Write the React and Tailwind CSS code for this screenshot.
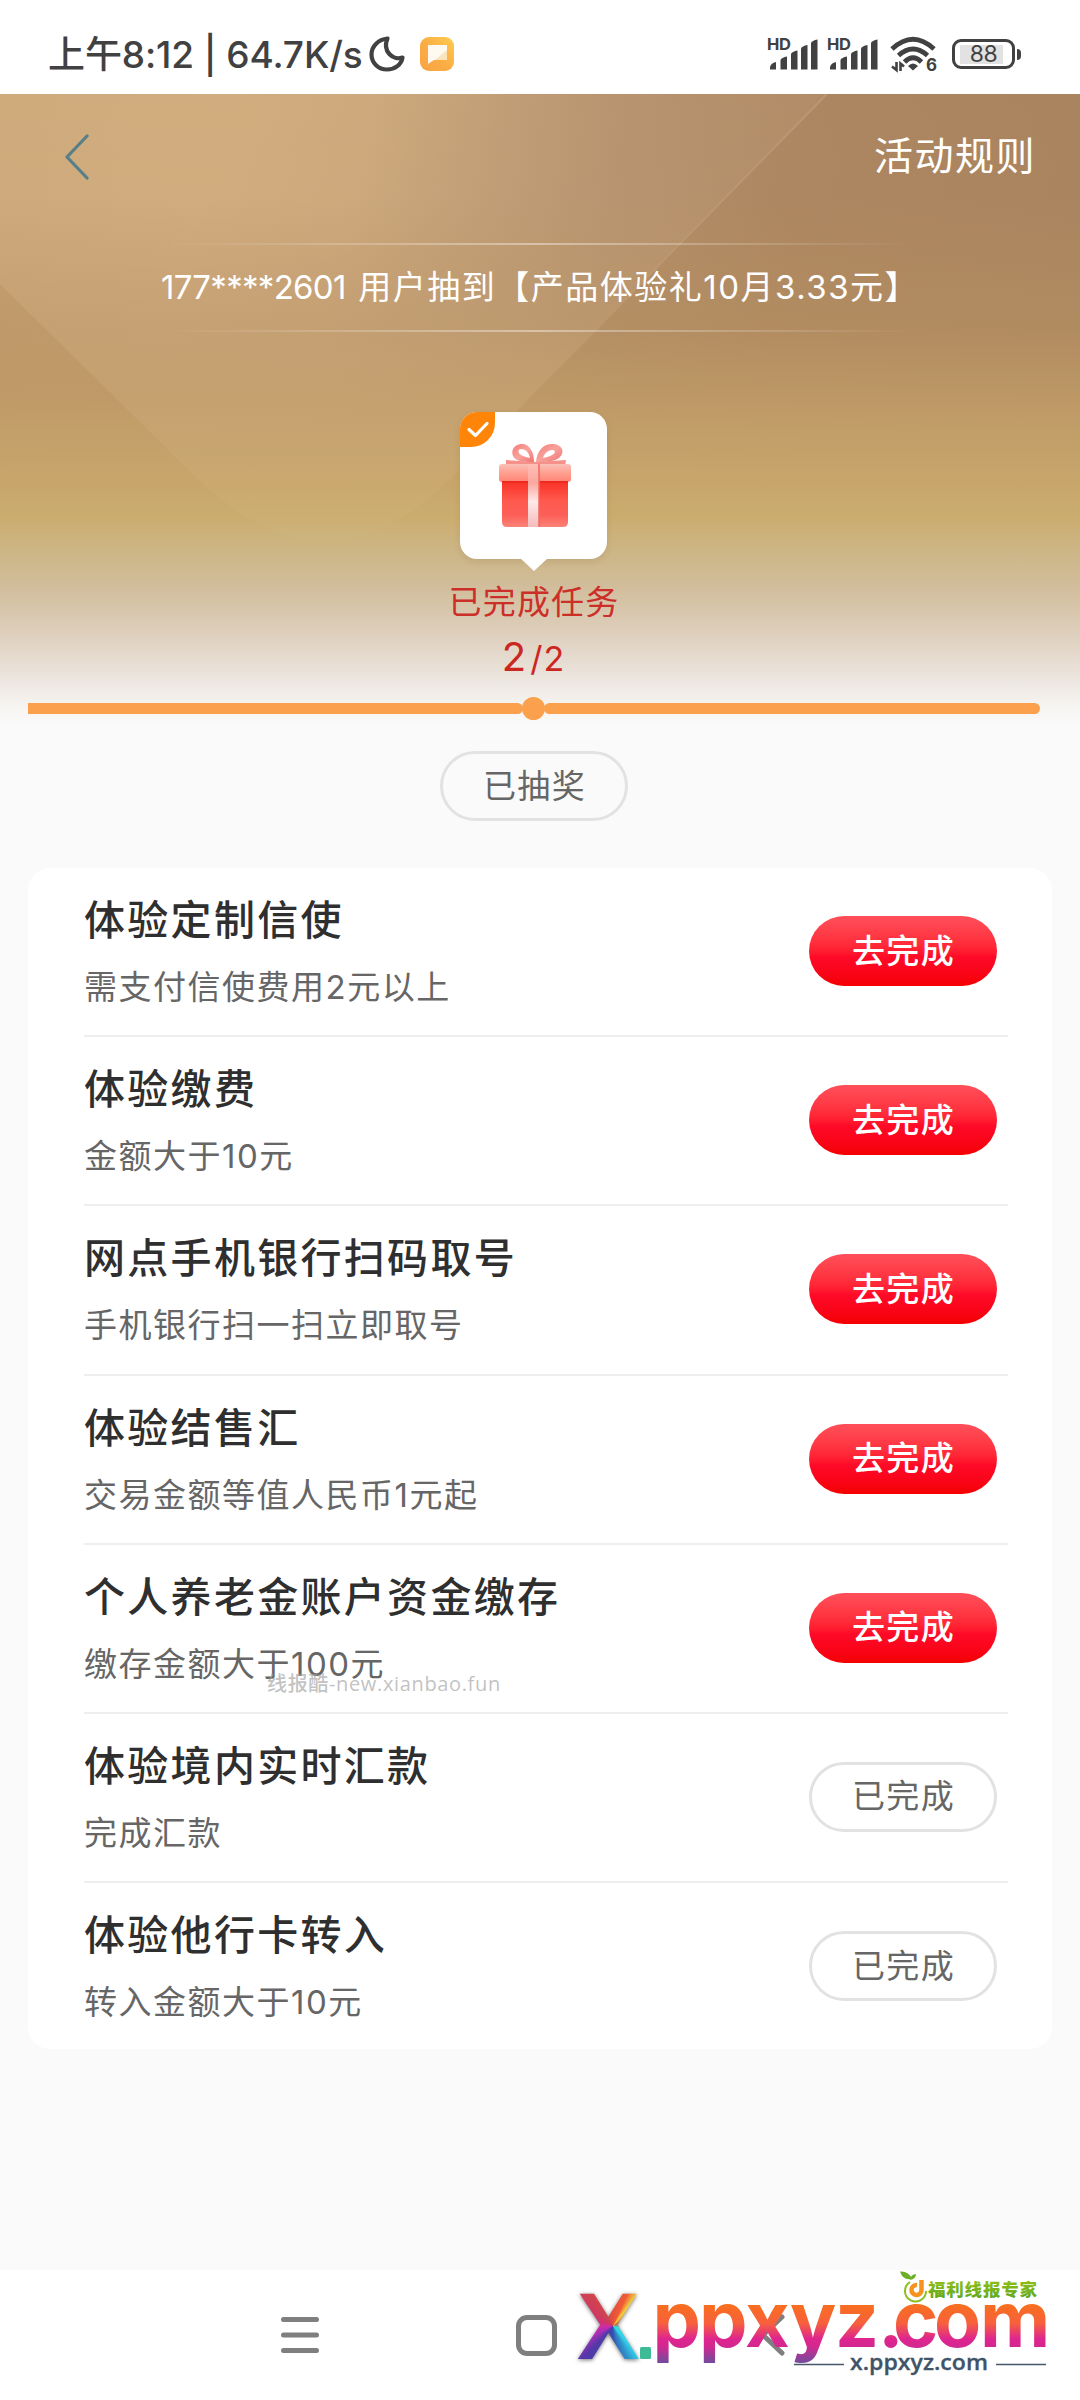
import clsx from "clsx";

const TASKS = [
  { title: "体验定制信使", desc: "需支付信使费用2元以上", done: false },
  { title: "体验缴费", desc: "金额大于10元", done: false },
  { title: "网点手机银行扫码取号", desc: "手机银行扫一扫立即取号", done: false },
  { title: "体验结售汇", desc: "交易金额等值人民币1元起", done: false },
  { title: "个人养老金账户资金缴存", desc: "缴存金额大于100元", done: false },
  { title: "体验境内实时汇款", desc: "完成汇款", done: true },
  { title: "体验他行卡转入", desc: "转入金额大于10元", done: true },
];

export default function App() {
  return (
    <div className="relative flex h-[2400px] w-[1080px] flex-col overflow-hidden bg-[#fafafa] font-['Inter','Noto_Sans_CJK_SC',sans-serif]">
      <StatusBar />

      {/* HERO */}
      <div className="relative h-[774px] shrink-0">
        <HeroBackground />
        <div className="relative flex h-full flex-col items-center">
          <div className="flex h-[124px] w-full items-center justify-between pr-[44px] pl-[63px]">
            <svg width="28" height="48" viewBox="0 0 28 48" fill="none">
              <path d="M24 4 L4 25 L24 46" stroke="#577f89" strokeWidth="3.2" strokeLinecap="round" strokeLinejoin="round" />
            </svg>
            <span className="pb-[2px] text-[39px] leading-none tracking-[1.5px] text-white">活动规则</span>
          </div>

          <div className="mt-[25px] mr-[6px] flex w-[760px] flex-col items-center">
            <div className="h-[2px] w-full bg-linear-to-r from-white/0 via-white/40 to-white/0"></div>
            <p className="flex h-[85px] items-center pl-[6px] text-[33px] leading-none whitespace-pre text-white">
              <span className="mr-[4px] tracking-[-0.7px]">177****2601 </span>
              <span className="tracking-[1.5px]">用户抽到【产品体验礼10月3.33元】</span>
            </p>
            <div className="h-[2px] w-full bg-linear-to-r from-white/0 via-white/40 to-white/0"></div>
          </div>

          <GiftBubble />
          <p className="mt-[26px] mr-[12px] text-[33px] leading-[34px] tracking-[1.2px] text-[#cc2e28]">已完成任务</p>
          <p className="mt-[15px] mr-[13px] flex h-[46px] items-baseline text-[#cc2621]">
            <span className="text-[40px] leading-[46px]">2</span>
            <span className="ml-[4px] text-[34px] leading-[46px] tracking-[1px]">/2</span>
          </p>

          <div className="mt-[17px] flex w-full items-center pr-[40px] pl-[28px]">
            <div className="h-[11px] w-[495px] rounded-r-full bg-[#fba14e]"></div>
            <div className="-mx-[1px] size-[23px] rounded-full bg-[#fba14e]"></div>
            <div className="h-[11px] flex-1 rounded-full bg-[#fba14e]"></div>
          </div>

          <div className="mt-[31px] mr-[12px]">
            <Pill done>已抽奖</Pill>
          </div>
        </div>
      </div>

      {/* TASKS */}
      <div className="relative mx-[28px] h-[1181px] shrink-0 rounded-[22px] bg-white pr-[44px] pl-[56px]">
        <div>
          {TASKS.map((task) => (
            <TaskRow key={task.title} {...task} />
          ))}
        </div>
        <span className="absolute top-[803px] left-[239px] font-['Open_Sans','Noto_Sans_CJK_SC',sans-serif] text-[20px] leading-[26px] font-medium tracking-[0.65px] whitespace-nowrap text-[#a0a0a0]/65">
          线报酷-new.xianbao.fun
        </span>
      </div>

      <NavBar />
    </div>
  );
}

function TaskRow({ title, desc, done }) {
  return (
    <div className="flex h-[169.2px] justify-between border-b-2 border-[#eeeeee] last:border-b-0">
      <div className="flex flex-col pt-[28px]">
        <p className="text-[41px] leading-[48px] font-medium tracking-[2.3px] text-[#2f2f2f]">{title}</p>
        <p className="mt-[23px] text-[33px] leading-[40px] tracking-[1.5px] text-[#666666]">{desc}</p>
      </div>
      <div className="mt-[48px] mr-[11px]">
        <Pill done={done}>{done ? "已完成" : "去完成"}</Pill>
      </div>
    </div>
  );
}

function Pill({ done, children }) {
  return (
    <div
      className={clsx(
        "flex h-[70px] w-[188px] items-center justify-center rounded-full pl-[1px] text-[33px] leading-none tracking-[1.3px]",
        done
          ? "border-[3px] border-[#e2e2e2] text-[#666666]"
          : "bg-linear-to-b from-[#ff4f5a] via-[#ff0a28] via-58% to-[#f40000] font-medium text-white"
      )}
    >
      {children}
    </div>
  );
}

function HeroBackground() {
  return (
    <svg className="absolute top-0 left-0" width="1080" height="640" viewBox="0 0 1080 640">
      <defs>
        <linearGradient id="heroTop" x1="0" x2="1" y1="0" y2="0.12">
          <stop offset="0" stopColor="#cba676" />
          <stop offset="0.2" stopColor="#cea979" />
          <stop offset="0.34" stopColor="#caa577" />
          <stop offset="0.46" stopColor="#bd9970" />
          <stop offset="0.58" stopColor="#b28e68" />
          <stop offset="0.75" stopColor="#ac8660" />
          <stop offset="1" stopColor="#a9845f" />
        </linearGradient>
        <linearGradient id="heroFade" x1="0" x2="0" y1="0" y2="1">
          <stop offset="0" stopColor="#bc9765" stopOpacity="0" />
          <stop offset="0.16" stopColor="#b58c60" stopOpacity="0.05" />
          <stop offset="0.36" stopColor="#b69061" stopOpacity="0.6" />
          <stop offset="0.48" stopColor="#bf9a67" stopOpacity="0.95" />
          <stop offset="0.61" stopColor="#c8a66b" />
          <stop offset="0.665" stopColor="#cbad70" />
          <stop offset="0.71" stopColor="#ccb584" />
          <stop offset="0.765" stopColor="#d1bc99" />
          <stop offset="0.85" stopColor="#dfd1c0" />
          <stop offset="0.91" stopColor="#ebe4dd" />
          <stop offset="0.955" stopColor="#f6f4f1" />
          <stop offset="0.985" stopColor="#fafafa" />
        </linearGradient>
        <linearGradient id="heroShape" x1="0" x2="0" y1="0" y2="1">
          <stop offset="0" stopColor="#ffe6d2" stopOpacity="0.06" />
          <stop offset="0.6" stopColor="#ffe6c8" stopOpacity="0.1" />
          <stop offset="1" stopColor="#ffe6c8" stopOpacity="0.02" />
        </linearGradient>
        <linearGradient id="heroEdge" x1="1" x2="0" y1="0" y2="1">
          <stop offset="0" stopColor="#ffe9d2" stopOpacity="0.14" />
          <stop offset="1" stopColor="#ffe9d2" stopOpacity="0" />
        </linearGradient>
      </defs>
      <rect width="1080" height="640" fill="url(#heroTop)" />
      <rect width="1080" height="640" fill="url(#heroFade)" />
      <path d="M0 0 H827 L450 385 Q330 505 205 392 L0 190 Z" fill="url(#heroShape)" />
      <path d="M827 0 L500 334" stroke="url(#heroEdge)" strokeWidth="2" />
    </svg>
  );
}

function GiftBubble() {
  return (
    <div className="relative mt-[80px] mr-[13px] flex size-[147px] items-center justify-center rounded-[17px] bg-white shadow-[0_3px_6px_rgba(120,90,40,0.15)]">
      <div className="absolute top-0 left-0 flex size-[35px] items-center justify-center rounded-tl-[17px] rounded-br-[24px] bg-[#ff8508]">
        <svg width="24" height="20" viewBox="0 0 24 20" fill="none">
          <path d="M3 9.5 L9.5 15.5 L21 3.5" stroke="#fff" strokeWidth="3.2" strokeLinecap="round" strokeLinejoin="round" />
        </svg>
      </div>
      <svg width="74" height="86" viewBox="0 0 74 86" className="mt-[1px] ml-[3px]">
        <defs>
          <linearGradient id="giftBox" x1="0" x2="0" y1="0" y2="1">
            <stop offset="0" stopColor="#f92e24" />
            <stop offset="0.45" stopColor="#ff5a4e" />
            <stop offset="0.75" stopColor="#fb5f58" />
            <stop offset="1" stopColor="#fb8378" />
          </linearGradient>
          <linearGradient id="giftLid" x1="0" x2="0" y1="0" y2="1">
            <stop offset="0" stopColor="#fbc0b8" />
            <stop offset="0.5" stopColor="#ff9f90" />
            <stop offset="1" stopColor="#ff8474" />
          </linearGradient>
          <linearGradient id="giftRibbon" x1="0" x2="0" y1="0" y2="1">
            <stop offset="0" stopColor="#ffbfb6" />
            <stop offset="0.3" stopColor="#f9a79e" />
            <stop offset="0.6" stopColor="#ffe9e7" />
            <stop offset="1" stopColor="#f4bcbb" />
          </linearGradient>
          <linearGradient id="giftBow" x1="0" x2="1" y1="0" y2="1">
            <stop offset="0" stopColor="#f27c7a" />
            <stop offset="0.5" stopColor="#f9a29c" />
            <stop offset="1" stopColor="#ef7370" />
          </linearGradient>
        </defs>
        <path d="M4 37 H70 V79 Q70 84 65 84 H9 Q4 84 4 79 Z" fill="url(#giftBox)" />
        <path d="M8 17 L37 19 L68 17 L67 23 H8 Z" fill="#f5908a" />
        <rect x="1" y="21" width="72" height="18" rx="3" fill="url(#giftLid)" />
        <rect x="4" y="38" width="66" height="2" fill="#ef2a20" />
        <rect x="30" y="21" width="11" height="63" fill="url(#giftRibbon)" />
        <path d="M41 21 V84" stroke="#ef6a62" strokeWidth="1.5" />
        <path
          fillRule="evenodd"
          fill="url(#giftBow)"
          d="M36 19 C36 8 31 1 24 1 C14 1 12 11 17 15.500 C21 19 29 19 36 19 Z M32 15 C31 9 27 6 23 6 C18 7 20 13 32 15 Z"
        />
        <path
          fillRule="evenodd"
          fill="url(#giftBow)"
          d="M38 19 C39 8 45 1 54 1 C64 1 68 9 61 15 C56 19 46 19 38 19 Z M45 15 C47 9 51 7 55 7 C59 8 57 13 45 15 Z"
        />
      </svg>
      <svg className="absolute -bottom-[12px] left-[60px]" width="28" height="13" viewBox="0 0 28 13">
        <path d="M0 0 H28 L14 13 Z" fill="#fff" />
      </svg>
    </div>
  );
}

function StatusBar() {
  return (
    <div className="flex h-[94px] shrink-0 items-center justify-between bg-white pt-[14px] pr-[59px] pl-[48px] text-[#414141]">
      <div className="flex items-center">
        <span className="w-[314px] pt-px text-[37px] leading-[40px] font-medium tracking-[-0.1px] whitespace-pre">
          上午8:12 | 64.7K/s
        </span>
        <svg className="ml-[7px]" width="36" height="36" viewBox="0 0 36 36" fill="none">
          <path
            d="M18.500 2.500 C9.500 3.500 2.500 10 2.500 18.500 C2.500 27 9.500 33.500 18 33.500 C26 33.500 32.500 28.500 33.500 21.500 C24 25 13 15 18.500 2.500 Z"
            stroke="#414141"
            strokeWidth="4.200"
            strokeLinejoin="round"
          />
        </svg>
        <svg className="ml-[15px]" width="34" height="34" viewBox="0 0 34 34">
          <defs>
            <linearGradient id="noteBg" x1="1" x2="0" y1="0" y2="1">
              <stop offset="0" stopColor="#fdcd4f" />
              <stop offset="0.5" stopColor="#fbae45" />
              <stop offset="1" stopColor="#f9a243" />
            </linearGradient>
          </defs>
          <rect width="34" height="34" rx="9" fill="url(#noteBg)" />
          <path d="M8 8 H27 V23 H14 L8 27 Z" fill="#fffaf0" />
          <path d="M27 13 V23 H15 Z" fill="#fbe3bb" />
        </svg>
      </div>

      <div className="flex items-center">
        <Signal />
        <div className="ml-[10px]">
          <Signal />
        </div>
        <Wifi />
        <div className="ml-[14px] flex items-center">
          <div className="flex h-[30px] w-[63px] items-center justify-center rounded-[9px] border-[3.500px] border-[#414141]">
            <span className="flex h-[19px] w-[48px] items-center justify-center bg-linear-to-r from-[#e2e2e2] from-90% to-transparent to-90% text-[23px] leading-none tracking-[-0.500px]">
              88
            </span>
          </div>
          <div className="ml-[2px] h-[11px] w-[4px] rounded-r-full bg-[#414141]"></div>
        </div>
      </div>
    </div>
  );
}

function Signal() {
  return (
    <svg className="overflow-visible" width="50" height="36" viewBox="0 0 50 36" fill="#414141">
      <text x="-1" y="14" fontSize="16.500" fontWeight="700" fontFamily="Inter" textLength="24">
        HD
      </text>
      <path d="M2 33.500 V31 Q3 27 8 26 V33.500 Z" />
      <path d="M12.500 33.500 V24 Q13.500 21.500 19 20.500 V33.500 Z" />
      <path d="M23 33.500 V18 Q24 15.500 29.500 14.500 V33.500 Z" />
      <path d="M33 33.500 V12.500 Q34 10 39.500 9 V33.500 Z" />
      <path d="M43 33.500 V7 Q44 4.500 49.500 3.500 V33.500 Z" />
    </svg>
  );
}

function Wifi() {
  return (
    <svg
      className="ml-[12px] overflow-visible"
      width="48"
      height="36"
      viewBox="0 0 48 36"
      fill="none"
      stroke="#414141"
      strokeWidth="4.800"
    >
      <path d="M2 13 Q23 -6.500 44 13" />
      <path d="M8.500 19.500 Q23 6.500 37.500 19.500" />
      <path d="M14.500 26 Q23 17.500 31.500 26" />
      <path d="M18 30 Q23 25 28 30 L23 34.500 Z" fill="#414141" stroke="none" />
      <path d="M6.500 26 V34 L2 30.500 M10.500 35 V27.500 L14 30.500" strokeWidth="2.600" />
      <text x="36" y="35" fontSize="17" fontWeight="700" fontFamily="Inter" fill="#414141" stroke="none">
        6
      </text>
    </svg>
  );
}

function NavBar() {
  return (
    <div className="relative mt-auto flex h-[130px] shrink-0 items-center bg-white pl-[281px]">
      <svg width="38" height="38" viewBox="0 0 38 38" stroke="#7f7f7f" strokeWidth="5" strokeLinecap="round">
        <path d="M2.500 3.500 H35.500 M2.500 19 H35.500 M2.500 34.500 H35.500" />
      </svg>
      <div className="ml-[197px] size-[41px] rounded-[11px] border-[5px] border-[#7f7f7f]"></div>
      <svg className="ml-[202px]" width="26" height="44" viewBox="0 0 26 44" fill="none">
        <path d="M23 4 L4 22 L23 40" stroke="#7f7f7f" strokeWidth="5" strokeLinecap="round" strokeLinejoin="round" />
      </svg>
      <Logo />
    </div>
  );
}

function Logo() {
  return (
    <div className="absolute top-0 left-[570px] h-[130px] w-[490px]">
      <span className="absolute top-[10px] left-[7px] bg-[conic-gradient(from_0deg_at_36px_46px,#e8503a_0deg,#ee5a38_24deg,#f2d23c_38deg,#d8553a_60deg,#35e0d0_110deg,#35d0ea_140deg,#2f90c8_155deg,#3350b0_180deg,#5238a8_222deg,#b02cb8_245deg,#d02ca0_268deg,#d03468_295deg,#cf4350_325deg,#e8503a_360deg)] bg-clip-text font-['Liberation_Sans',sans-serif] text-[94px] leading-[94px] font-bold text-transparent drop-shadow-[0_1px_2px_rgba(0,0,0,0.55)]">
        X
      </span>
      <svg className="absolute top-0 left-0" width="490" height="130" viewBox="0 0 490 130">
        <defs>
          <linearGradient id="logoText" gradientUnits="userSpaceOnUse" x1="0" x2="0" y1="33" y2="91">
            <stop offset="0" stopColor="#f8701d" />
            <stop offset="0.350" stopColor="#f7603c" />
            <stop offset="0.620" stopColor="#de2590" />
            <stop offset="0.740" stopColor="#d5278f" />
            <stop offset="1" stopColor="#7c489c" />
          </linearGradient>
          <linearGradient id="logoGreen" x1="0" x2="0" y1="0" y2="1">
            <stop offset="0" stopColor="#9cc414" />
            <stop offset="1" stopColor="#5aa521" />
          </linearGradient>
        </defs>
        <rect x="70" y="77" width="11" height="12" rx="1.500" fill="#3dba96" />
        <text
          x="82.500 129 175 220 265 308 323 364 410"
          y="77"
          fontSize="77"
          fontWeight="700"
          fontFamily="Inter"
          fill="url(#logoText)"
        >
          ppxyz.com
        </text>
        <path d="M330 1.500 Q339 1 342 9 Q333 11 330 1.500 Z M340 10 Q341 4 346 4 Q346 9 340 10 Z" fill="#6cb026" />
        <path d="M340 12 A10.500 10.500 0 1 0 356 21" fill="none" stroke="#8abf20" strokeWidth="2" />
        <path d="M351.500 10 V20 A5 5 0 1 1 347 15" fill="none" stroke="#f5931e" strokeWidth="4.500" />
        <text
          x="358"
          y="26"
          fontSize="17.500"
          fontWeight="900"
          fontFamily="Noto Sans CJK SC"
          fill="url(#logoGreen)"
          textLength="109"
        >
          福利线报专家
        </text>
        <path d="M224 94.500 H274 M426 94.500 H476" stroke="#44586a" strokeWidth="1.500" />
        <text
          x="280"
          y="100"
          fontSize="21.500"
          fontWeight="600"
          fontFamily="Open Sans"
          fill="#3f5468"
          stroke="#3f5468"
          strokeWidth="0.300"
          textLength="138"
          lengthAdjust="spacingAndGlyphs"
        >
          x.ppxyz.com
        </text>
      </svg>
    </div>
  );
}
